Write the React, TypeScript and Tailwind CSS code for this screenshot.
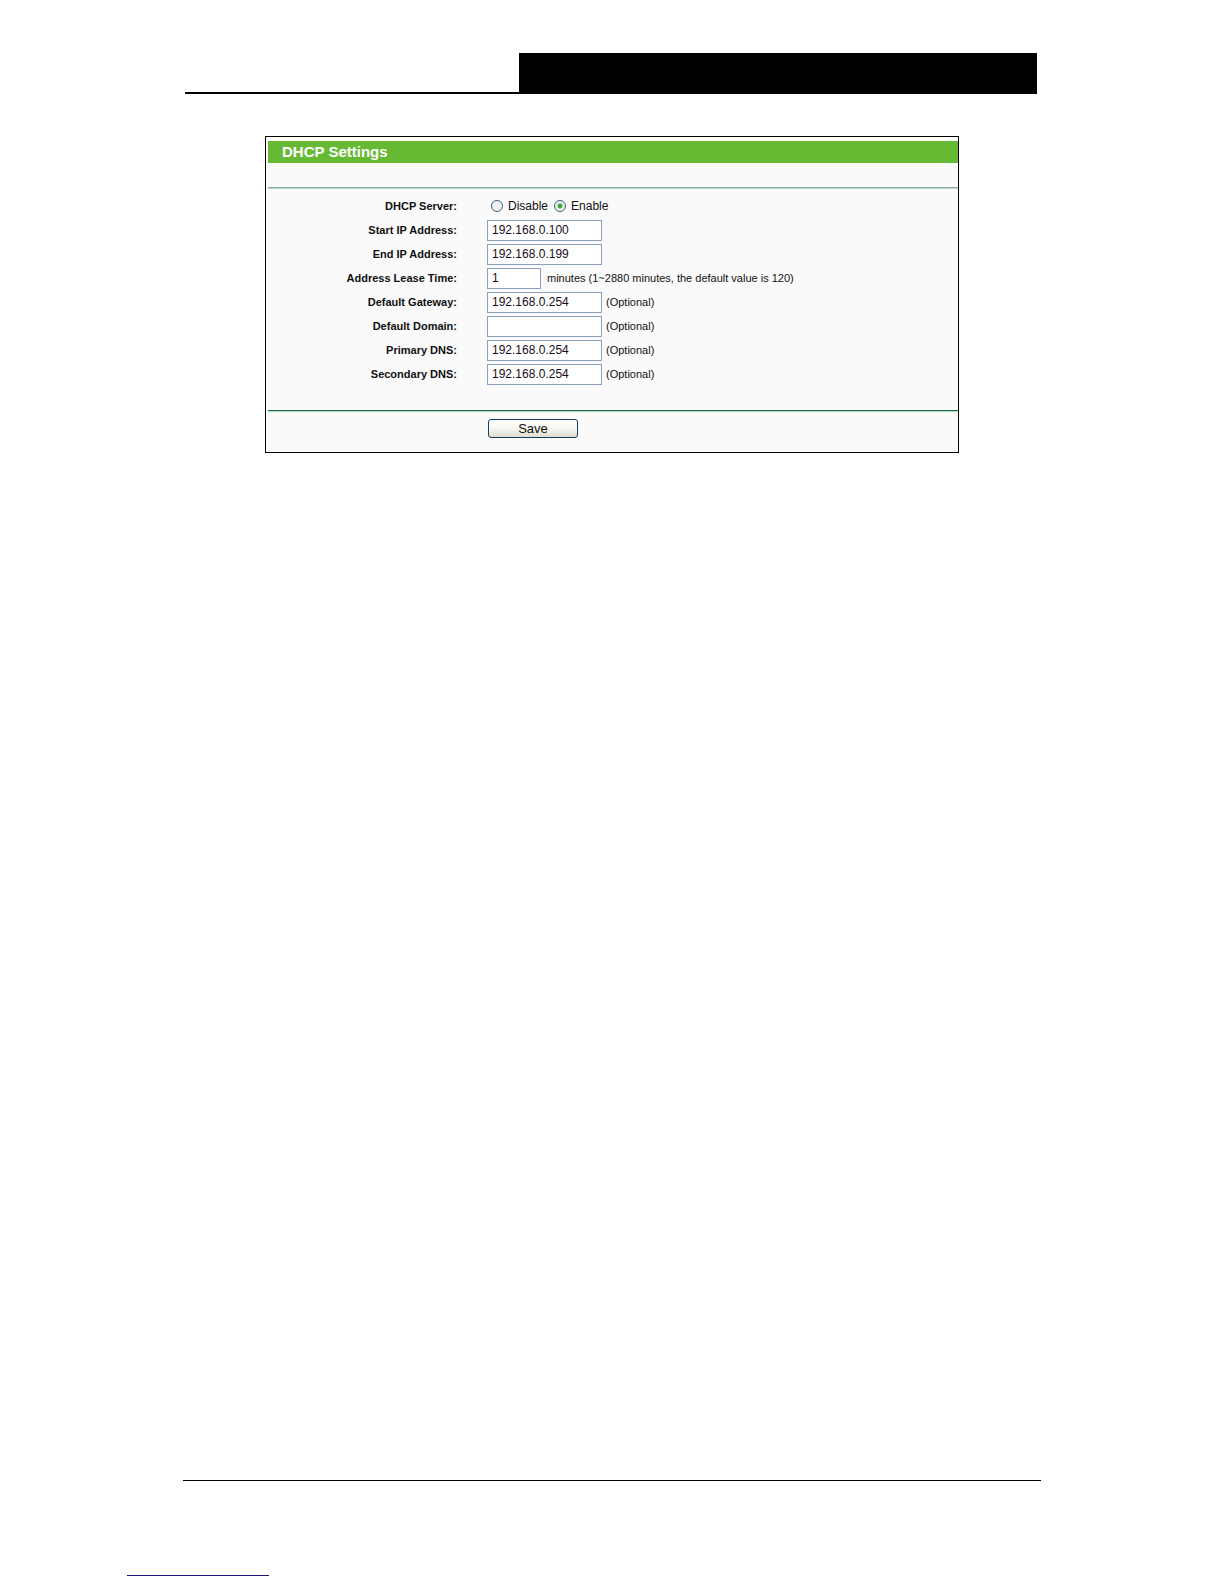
import { useState } from 'react';
import type { ReactNode } from 'react';

interface RowProps {
  label: string;
  htmlFor: string;
  children: ReactNode;
}

function Row({ label, htmlFor, children }: RowProps) {
  return (
    <div className="flex h-6 items-center gap-[30px]">
      <label htmlFor={htmlFor} className="w-[189px] shrink-0 text-right text-[11px] font-bold">
        {label}
      </label>
      <div className="flex min-w-0 items-center">{children}</div>
    </div>
  );
}

interface TextFieldProps {
  id: string;
  value: string;
  onChange: (id: string, value: string) => void;
  short?: boolean;
}

function TextField({ id, value, onChange, short }: TextFieldProps) {
  return (
    <input
      id={id}
      type="text"
      value={value}
      onChange={(e) => onChange(id, e.target.value)}
      className={`${short ? 'w-[54px]' : 'w-[115px]'} h-[21px] border border-[#8ba0bf] bg-white px-1 text-[#1c0a24] outline-none focus:border-[#3c6ea5]`}
    />
  );
}

interface RadioProps {
  id: string;
  label: string;
  checked: boolean;
  onSelect: () => void;
}

function Radio({ id, label, checked, onSelect }: RadioProps) {
  return (
    <span className="flex items-center gap-[5px]">
      <input
        id={id}
        type="radio"
        name="dhcp"
        checked={checked}
        onChange={onSelect}
        className="size-3 appearance-none rounded-full border border-[#3f5f80] bg-[#f1f2ef] checked:bg-[radial-gradient(circle,#2fa52f_0,#43b043_2px,#eef3ec_3px)]"
      />
      <label htmlFor={id}>{label}</label>
    </span>
  );
}

const addressFields = [
  { id: 'startIp', label: 'Start IP Address:' },
  { id: 'endIp', label: 'End IP Address:' },
];

const optionalFields = [
  { id: 'gateway', label: 'Default Gateway:' },
  { id: 'domain', label: 'Default Domain:' },
  { id: 'primaryDns', label: 'Primary DNS:' },
  { id: 'secondaryDns', label: 'Secondary DNS:' },
];

function DhcpSettings() {
  const [enabled, setEnabled] = useState(true);
  const [values, setValues] = useState<Record<string, string>>({
    startIp: '192.168.0.100',
    endIp: '192.168.0.199',
    leaseTime: '1',
    gateway: '192.168.0.254',
    domain: '',
    primaryDns: '192.168.0.254',
    secondaryDns: '192.168.0.254',
  });

  const handleChange = (id: string, value: string) => {
    setValues((prev) => ({ ...prev, [id]: value }));
  };

  return (
    <form
      onSubmit={(e) => e.preventDefault()}
      className="mx-auto mt-[42px] w-full max-w-[694px] border border-black bg-white pt-1 pl-0.5 text-xs text-[#111]"
    >
      <h1 className="bg-[#66b933] pl-3.5 text-[15px] leading-[22px] font-bold text-white">DHCP Settings</h1>
      <div className="bg-[#fafafa]">
        <div className="h-6" />
        <div className="border-t border-b border-t-[#83b09c] border-b-[#c3d6cd]" />
        <div className="pt-[5px] pb-6">
          <Row label="DHCP Server:" htmlFor="dhcpEnable">
            <div className="flex gap-1.5 pl-1">
              <Radio id="dhcpDisable" label="Disable" checked={!enabled} onSelect={() => setEnabled(false)} />
              <Radio id="dhcpEnable" label="Enable" checked={enabled} onSelect={() => setEnabled(true)} />
            </div>
          </Row>
          {addressFields.map((f) => (
            <Row key={f.id} label={f.label} htmlFor={f.id}>
              <TextField id={f.id} value={values[f.id]} onChange={handleChange} />
            </Row>
          ))}
          <Row label="Address Lease Time:" htmlFor="leaseTime">
            <TextField id="leaseTime" value={values.leaseTime} onChange={handleChange} short />
            <span className="pl-1.5 text-[11px]">minutes (1~2880 minutes, the default value is 120)</span>
          </Row>
          {optionalFields.map((f) => (
            <Row key={f.id} label={f.label} htmlFor={f.id}>
              <TextField id={f.id} value={values[f.id]} onChange={handleChange} />
              <span className="pl-1 text-[11px]">(Optional)</span>
            </Row>
          ))}
        </div>
        <div className="border-t border-b border-t-[#1f7048] border-b-[#a5d8bd]" />
        <div className="pt-[7px] pb-3.5 pl-[220px]">
          <button
            type="submit"
            className="flex h-[19px] w-[90px] items-center justify-center rounded-[3px] border border-[#123f68] bg-linear-to-b from-white via-[#f6f5f0] to-[#dfdccf] text-[13px]"
          >
            Save
          </button>
        </div>
      </div>
    </form>
  );
}

export default function App() {
  return (
    <div className="flex min-h-screen flex-col bg-white font-['Liberation_Sans',Arial,sans-serif]">
      <div className="mx-auto flex w-full max-w-[858px] grow flex-col pt-[53px]">
        <header className="mr-1 ml-0.5 flex justify-end border-b-2 border-black">
          <div className="h-[39px] w-[518px] bg-black" />
        </header>
        <main>
          <DhcpSettings />
        </main>
      </div>
      <footer>
        <div className="mx-auto w-full max-w-[858px] border-t border-black" />
        <div className="mt-[94px] mb-2 ml-[127px] w-[142px] border-t border-[#14147c]" />
      </footer>
    </div>
  );
}
